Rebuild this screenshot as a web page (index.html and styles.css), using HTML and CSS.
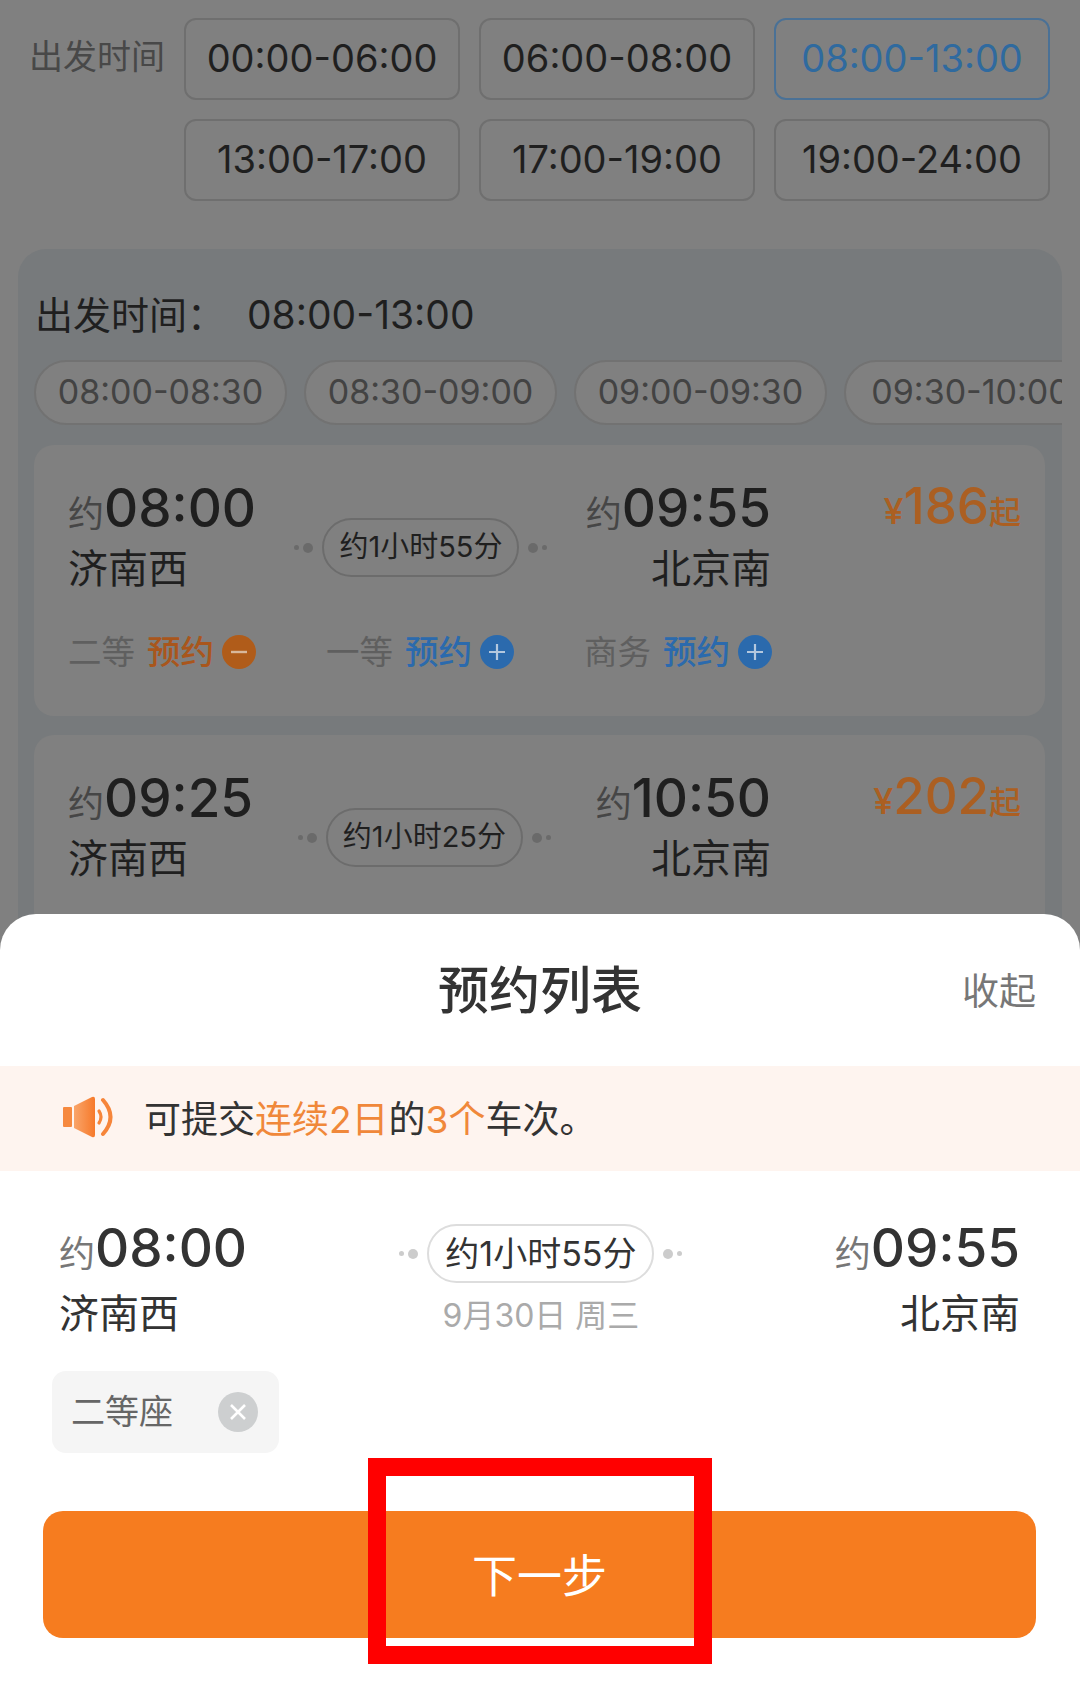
FILE: index.html
```html
<!DOCTYPE html>
<html lang="zh-CN">
<head>
    <meta charset="UTF-8">
    <meta name="viewport" content="width=device-width, initial-scale=1.0">
    <title>预约列表</title>
    <link rel="stylesheet" href="styles.css">
</head>
<body>
<div class="page">
  <!-- time range filter -->
  <div class="filter">
    <div class="filter-label">出发时间</div>
    <div class="filter-grid">
      <div class="range">00:00-06:00</div>
      <div class="range">06:00-08:00</div>
      <div class="range range-on">08:00-13:00</div>
      <div class="range">13:00-17:00</div>
      <div class="range">17:00-19:00</div>
      <div class="range">19:00-24:00</div>
    </div>
  </div>

  <!-- train list -->
  <div class="panel">
    <div class="panel-title"><span>出发时间：</span><span class="panel-range">08:00-13:00</span></div>
    <div class="slots">
      <div class="slot">08:00-08:30</div>
      <div class="slot">08:30-09:00</div>
      <div class="slot">09:00-09:30</div>
      <div class="slot">09:30-10:00</div>
    </div>

    <div class="card">
      <div class="train">
        <div class="stop">
          <div class="time"><span class="about">约</span>08:00</div>
          <div class="station">济南西</div>
        </div>
        <div class="link">
          <i class="dot-s"></i><i class="dot-b"></i>
          <div class="duration">约1小时55分</div>
          <i class="dot-b"></i><i class="dot-s"></i>
        </div>
        <div class="stop stop-end">
          <div class="time"><span class="about">约</span>09:55</div>
          <div class="station">北京南</div>
        </div>
        <div class="price"><span class="yen">¥</span>186<span class="from">起</span></div>
      </div>
      <div class="seats">
        <div class="seat">
          <span class="seat-name">二等</span><span class="book book-on">预约</span>
          <svg class="seat-icon" viewBox="0 0 34 34"><circle cx="17" cy="17" r="17" fill="#b05c1a"/><path d="M9 17h16" stroke="#d8b89c" stroke-width="2.4"/></svg>
        </div>
        <div class="seat">
          <span class="seat-name">一等</span><span class="book">预约</span>
          <svg class="seat-icon" viewBox="0 0 34 34"><circle cx="17" cy="17" r="17" fill="#2b6aad"/><path d="M9 17h16M17 9v16" stroke="#b4c8de" stroke-width="2.2"/></svg>
        </div>
        <div class="seat">
          <span class="seat-name">商务</span><span class="book">预约</span>
          <svg class="seat-icon" viewBox="0 0 34 34"><circle cx="17" cy="17" r="17" fill="#2b6aad"/><path d="M9 17h16M17 9v16" stroke="#b4c8de" stroke-width="2.2"/></svg>
        </div>
      </div>
    </div>

    <div class="card">
      <div class="train">
        <div class="stop">
          <div class="time"><span class="about">约</span>09:25</div>
          <div class="station">济南西</div>
        </div>
        <div class="link">
          <i class="dot-s"></i><i class="dot-b"></i>
          <div class="duration">约1小时25分</div>
          <i class="dot-b"></i><i class="dot-s"></i>
        </div>
        <div class="stop stop-end">
          <div class="time"><span class="about">约</span>10:50</div>
          <div class="station">北京南</div>
        </div>
        <div class="price"><span class="yen">¥</span>202<span class="from">起</span></div>
      </div>
    </div>
  </div>

  <!-- bottom sheet -->
  <div class="sheet">
    <div class="sheet-head">
      <div></div>
      <div class="sheet-title">预约列表</div>
      <div class="sheet-close">收起</div>
    </div>
    <div class="notice">
      <svg class="notice-icon" viewBox="0 0 53 42">
        <defs>
          <linearGradient id="horn" x1="0" y1="0" x2="1" y2="0">
            <stop offset="0" stop-color="#f9a56a"/>
            <stop offset="1" stop-color="#f6792a"/>
          </linearGradient>
        </defs>
        <rect x="1" y="11" width="9" height="20" rx="1" fill="#f6893f"/>
        <path d="M12 10 L30 1 Q33 0 33 3 V39 Q33 42 30 41 L12 32Z" fill="url(#horn)"/>
        <path d="M37 15 Q41 21 37 27" fill="none" stroke="#f6853a" stroke-width="3.200" stroke-linecap="round"/>
        <path d="M41 4 Q56 21 41 38" fill="none" stroke="#f6853a" stroke-width="4" stroke-linecap="round"/>
      </svg>
      <div>可提交<span class="hot">连续2日</span>的<span class="hot">3个</span>车次。</div>
    </div>
    <div class="route">
      <div class="stop">
        <div class="time"><span class="about">约</span>08:00</div>
        <div class="station">济南西</div>
      </div>
      <div class="route-mid">
        <div class="link">
          <i class="dot-s"></i><i class="dot-b"></i>
          <div class="duration">约1小时55分</div>
          <i class="dot-b"></i><i class="dot-s"></i>
        </div>
        <div class="route-date">9月30日 周三</div>
      </div>
      <div class="stop stop-end">
        <div class="time"><span class="about">约</span>09:55</div>
        <div class="station">北京南</div>
      </div>
    </div>
    <div class="chip">
      <span class="chip-name">二等座</span>
      <svg class="chip-close" viewBox="0 0 40 40"><circle cx="20" cy="20" r="20" fill="#cdcfd0"/><path d="M13 13l14 14M27 13L13 27" stroke="#fff" stroke-width="2.600"/></svg>
    </div>
    <div class="next">
      下一步
      <div class="mark"></div>
    </div>
  </div>
</div>
</body>
</html>
```

FILE: styles.css
```css
/* Colours of the dimmed page behind the sheet */
:root {
    --dim-bg: #808080;
    --dim-panel: #777a7c;
    --dim-line: #6f6f6f;
    --dim-text: #1f1f1f;
    --dim-sub: #464646;
    --dim-blue: #2b6aad;
    --dim-orange: #ab5f22;
    --orange: #f67c1f;
    --text: #333;
}

* {
    box-sizing: border-box;
}

html, body {
    margin: 0;
    padding: 0;
}

body {
    font-family: Inter, "Noto Sans CJK SC", sans-serif;
    color: var(--dim-text);
}

.page {
    position: relative;
    width: 1080px;
    height: 1697px;
    overflow: hidden;
    background-color: var(--dim-bg);
}

/* Time range filter */
.filter {
    display: flex;
    padding: 18px 29px 0 29px;
}

.filter-label {
    width: 155px;
    padding-top: 15px;
    font-size: 34px;
    line-height: 48px;
    color: #484848;
}

.filter-grid {
    display: grid;
    grid-template-columns: repeat(3, 276px);
    grid-auto-rows: 82px;
    gap: 19px;
}

.range {
    display: flex;
    align-items: center;
    justify-content: center;
    padding-bottom: 2px;
    border: 2px solid var(--dim-line);
    border-radius: 12px;
    font-size: 38px;
}

.range-on {
    border-color: #4a7196;
    color: #2f6a9f;
}

/* Train list */
.panel {
    height: 900px;
    margin: 48px 18px 0;
    padding: 43px 17px 0 16px;
    background-color: var(--dim-panel);
    border-radius: 28px;
}

.panel-title {
    display: flex;
    padding-left: 1px;
    font-size: 38px;
    line-height: 46px;
}

.panel-range {
    margin-left: 22px;
    font-size: 39px;
}

.slots {
    display: flex;
    gap: 17px;
    margin: 22px -17px 0 0;
    overflow: hidden;
}

.slot {
    flex: 0 0 253px;
    height: 65px;
    line-height: 60px;
    text-align: center;
    font-size: 34px;
    white-space: nowrap;
    color: #434343;
    background-color: var(--dim-bg);
    border: 2px solid #727272;
    border-radius: 33px;
}

.card {
    height: 271px;
    margin: 20px 0 0;
    padding: 27px 24px 0 34px;
    background-color: var(--dim-bg);
    border-radius: 20px;
}

.card + .card {
    height: 300px;
    margin-top: 19px;
}

.train, .route {
    display: flex;
    align-items: flex-start;
}

.time {
    font-size: 53px;
    line-height: 72px;
    font-weight: 500;
    white-space: nowrap;
}

.about {
    font-size: 36px;
    line-height: 1;
    font-weight: 400;
    color: var(--dim-sub);
}

.station {
    font-size: 40px;
    line-height: 50px;
}

.stop-end {
    text-align: right;
}

.link {
    display: flex;
    align-items: center;
    justify-content: center;
}

.train .link {
    flex: 1;
    margin-top: 46px;
}

.duration {
    height: 59px;
    line-height: 53px;
    margin: 0 8px 0 8px;
    padding: 0 15px;
    font-size: 29px;
    white-space: nowrap;
    border: 2px solid #6c6c6c;
    border-radius: 30px;
}

.dot-s, .dot-b {
    border-radius: 50%;
    background-color: #6a6a6a;
}

.dot-s {
    width: 5px;
    height: 5px;
    margin: 0 3px;
}

.dot-b {
    width: 10px;
    height: 10px;
    margin: 0 1px;
}

.price {
    flex: 0 0 250px;
    margin-top: 2px;
    text-align: right;
    font-size: 51px;
    line-height: 64px;
    font-weight: 500;
    white-space: nowrap;
    color: var(--dim-orange);
}

.yen {
    font-size: 36px;
}

.from {
    font-size: 32px;
}

.seats {
    display: flex;
    margin-top: 36px;
}

.seat {
    flex: 0 0 258px;
    display: flex;
    align-items: center;
    font-size: 33.500px;
    line-height: 44px;
}

.seat-name {
    color: #5f5f5f;
}

.book {
    margin-left: 12px;
    font-weight: 500;
    color: var(--dim-blue);
}

.book-on {
    color: #a9561c;
}

.seat-icon {
    width: 34px;
    height: 34px;
    margin-left: 8px;
}

/* Bottom sheet */
.sheet {
    position: absolute;
    left: 0;
    right: 0;
    bottom: 0;
    height: 783px;
    color: var(--text);
    background-color: #fff;
    border-radius: 36px 36px 0 0;
}

.sheet-head {
    display: grid;
    grid-template-columns: 1fr auto 1fr;
    align-items: center;
    height: 146px;
    margin-bottom: 6px;
    padding-right: 44px;
    padding-left: 44px;
}

.sheet-title {
    font-size: 51px;
    font-weight: 500;
}

.sheet-close {
    justify-self: end;
    margin-top: 4px;
    font-size: 37px;
    color: #777;
}

.notice {
    display: flex;
    align-items: center;
    height: 105px;
    padding-bottom: 3px;
    padding-left: 62px;
    font-size: 37px;
    background-color: #fef4ef;
}

.notice-icon {
    width: 53px;
    height: 42px;
    margin-right: 29px;
}

.hot {
    color: #f0883a;
}

.route {
    padding: 41px 60px 0 59px;
}

.route .time {
    color: var(--text);
}

.route .about {
    color: #777;
}

.route .station {
    line-height: 60px;
}

.route-mid {
    flex: 1;
    padding-top: 12px;
    text-align: center;
}

.route .duration {
    width: 227px;
    padding: 0;
    line-height: 55px;
    text-align: center;
    font-size: 34px;
    border-color: #ddd;
}

.route .dot-s, .route .dot-b {
    background-color: #ccc;
}

.route-date {
    margin-top: 11px;
    font-size: 32px;
    line-height: 44px;
    color: #aaa;
}

.chip {
    display: flex;
    align-items: center;
    width: 227px;
    height: 82px;
    margin: 27px 0 0 52px;
    padding: 0 21px 0 19px;
    font-size: 34px;
    color: #666;
    background-color: #f5f5f5;
    border-radius: 14px;
}

.chip-name {
    margin-top: -6px;
}

.chip-close {
    width: 40px;
    height: 40px;
    margin-left: auto;
}

.next {
    position: relative;
    height: 127px;
    line-height: 131px;
    margin: 58px 44px 0 43px;
    text-align: center;
    font-size: 45px;
    color: #fff;
    background-color: var(--orange);
    border-radius: 20px;
}

/* Red annotation box drawn over the button */
.mark {
    position: absolute;
    left: 325px;
    top: -53px;
    width: 344px;
    height: 206px;
    border: 18px solid #f00;
}
```
